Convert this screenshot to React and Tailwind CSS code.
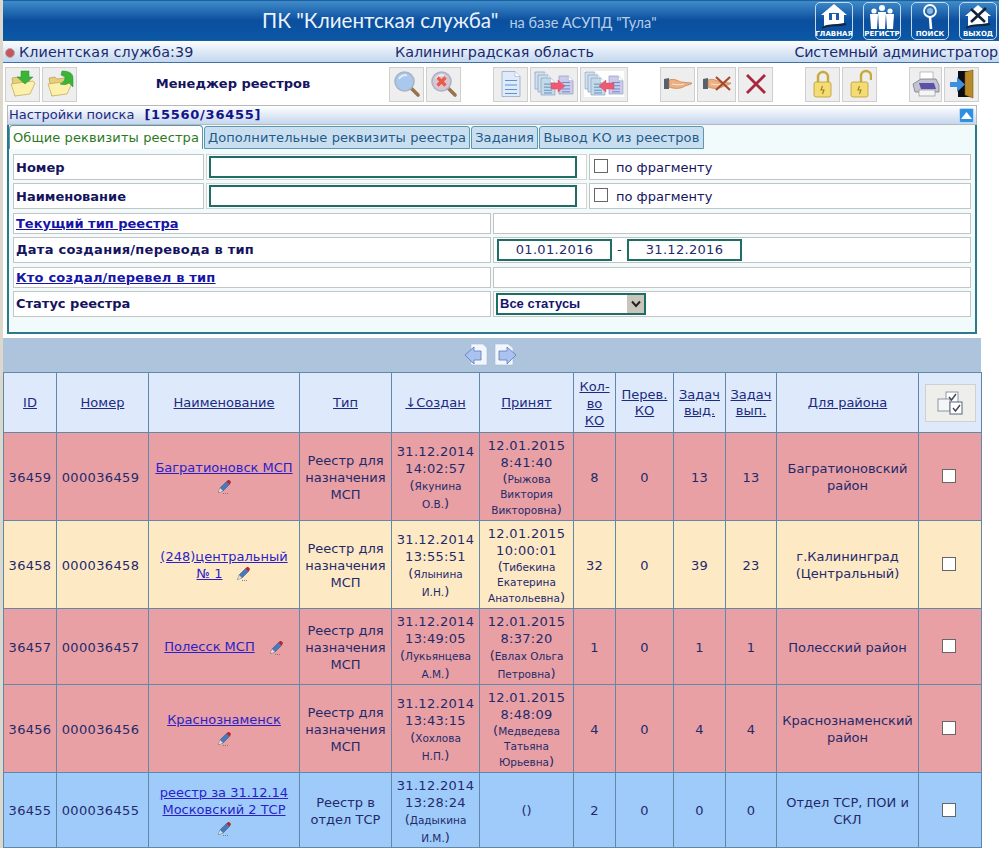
import React from 'react';

const FONT = { fontFamily: '"DejaVu Sans", Verdana, sans-serif' };

const rows = [
  { id: '36459', num: '000036459', name: ['Багратионовск МСП'], pen: 'below', type: ['Реестр для', 'назначения', 'МСП'], date: '31.12.2014', time: '14:02:57', by: ['Якунина', 'О.В.'], acceptDate: '12.01.2015', acceptTime: '8:41:40', acceptBy: ['Рыжова', 'Виктория', 'Викторовна'], ko: 8, moved: 0, given: 13, done: 13, area: ['Багратионовский', 'район'], bg: 'bg-[#e8a0a4]', h: 'h-[88px]' },
  { id: '36458', num: '000036458', name: ['(248)центральный', '№ 1'], pen: 'inline', type: ['Реестр для', 'назначения', 'МСП'], date: '31.12.2014', time: '13:55:51', by: ['Ялынина', 'И.Н.'], acceptDate: '12.01.2015', acceptTime: '10:00:01', acceptBy: ['Тибекина', 'Екатерина', 'Анатольевна'], ko: 32, moved: 0, given: 39, done: 23, area: ['г.Калининград', '(Центральный)'], bg: 'bg-[#fee9c5]', h: 'h-[88px]' },
  { id: '36457', num: '000036457', name: ['Полесск МСП'], pen: 'inline', type: ['Реестр для', 'назначения', 'МСП'], date: '31.12.2014', time: '13:49:05', by: ['Лукьянцева', 'А.М.'], acceptDate: '12.01.2015', acceptTime: '8:37:20', acceptBy: ['Евлах Ольга', 'Петровна'], ko: 1, moved: 0, given: 1, done: 1, area: ['Полесский район'], bg: 'bg-[#e8a0a4]', h: 'h-[76px]' },
  { id: '36456', num: '000036456', name: ['Краснознаменск'], pen: 'below', type: ['Реестр для', 'назначения', 'МСП'], date: '31.12.2014', time: '13:43:15', by: ['Хохлова', 'Н.П.'], acceptDate: '12.01.2015', acceptTime: '8:48:09', acceptBy: ['Медведева', 'Татьяна', 'Юрьевна'], ko: 4, moved: 0, given: 4, done: 4, area: ['Краснознаменский', 'район'], bg: 'bg-[#e8a0a4]', h: 'h-[88px]' },
  { id: '36455', num: '000036455', name: ['реестр за 31.12.14', 'Московский 2 ТСР'], pen: 'below', type: ['Реестр в', 'отдел ТСР'], date: '31.12.2014', time: '13:28:24', by: ['Дадыкина', 'И.М.'], acceptDate: '', acceptTime: '', acceptBy: [], ko: 2, moved: 0, given: 0, done: 0, area: ['Отдел ТСР, ПОИ и', 'СКЛ'], bg: 'bg-[#9fcbfb]', h: 'h-[75px]' },
];

function Pencil() {
  return (
    <svg width="16" height="16" viewBox="0 0 16 16" className="inline-block align-middle">
      <path d="M2.5 13.5 L4 9 L10.5 2.5 L13.5 5.5 L7 12 Z" fill="#4a78bd" stroke="#2e4f7c" strokeWidth="0.5" />
      <path d="M2.5 13.5 L4 9 L7 12 Z" fill="#eadfc4" />
      <path d="M10.5 2.5 L12 1 C13.4 0.4 15.4 2.4 14.8 3.8 L13.5 5.5 Z" fill="#b5262a" />
      <path d="M7 14.5h1M9 14.5h1M11 14.5h1" stroke="#6b6b6b" strokeWidth="0.8" />
    </svg>
  );
}

function Folder({ arrow }) {
  return (
    <svg width="28" height="28" viewBox="0 0 28 28">
      <path d="M3 8 L9 7 L11 9 L20 8 L22 20 L6 26 Z" fill="#e6cf7a" stroke="#b59c4e" strokeWidth="0.7" />
      <path d="M6 26 L2 14 L24 11 L26 13 L21 24 Z" fill="#fbf0ac" stroke="#c0a550" strokeWidth="0.7" />
      {arrow === 'down' ? (
        <path d="M12 1 H20 V7 H24 L16 14 L8 7 H12 Z" fill="#3cb339" stroke="#2b8f2c" strokeWidth="0.5" />
      ) : (
        <path d="M16 1 C21 1 27 2 27 8 V17 L23 13 C20 15 18 15 14 14 C18 12 19 10 19 7 L15 5 Z" fill="#3cb339" stroke="#2b8f2c" strokeWidth="0.5" />
      )}
    </svg>
  );
}

function Lens({ cross }) {
  return (
    <svg width="28" height="28" viewBox="0 0 28 28">
      <path d="M18 18 L25 25" stroke="#96744e" strokeWidth="3.6" strokeLinecap="round" />
      <circle cx="11.5" cy="11.5" r="9.5" fill={cross ? '#d9c6d2' : '#a9c8ec'} stroke="#a8b4c6" strokeWidth="1.6" />
      <path d="M6 9 a6.5 6.5 0 0 1 8 -3.5" stroke="#e8f2ff" strokeWidth="1.8" fill="none" />
      {cross && <path d="M7.5 7.5 L15.5 15.5 M15.5 7.5 L7.5 15.5" stroke="#ea5a4a" strokeWidth="3.2" />}
    </svg>
  );
}

function Doc({ x = 0, y = 0, w = 20, h = 26, fill = '#dfeafa' }) {
  const fold = Math.min(5, w / 3);
  return (
    <g transform={`translate(${x} ${y})`}>
      <path d={`M0 0H${w - fold}L${w} ${fold}V${h}H0Z`} fill={fill} stroke="#8a9fc0" strokeWidth="0.7" />
      <path d={`M${w - fold} 0V${fold}H${w}`} fill="#fff" stroke="#8a9fc0" strokeWidth="0.5" />
      <path d={`M3 ${h * 0.36}H${w - 3}M3 ${h * 0.54}H${w - 3}M3 ${h * 0.72}H${w - 3}M3 ${h * 0.88}H${w - 3}`} stroke="#5f93c8" strokeWidth="1" />
    </g>
  );
}

function DocIcon() {
  return <svg width="20" height="26" viewBox="0 0 20 26"><Doc x={1} y={0.5} w={18} h={25} /></svg>;
}

function DocsArrow({ flip }) {
  return (
    <svg width="40" height="26" viewBox="0 0 40 26" className={flip ? 'bg-white' : ''}>
      <Doc x={1} y={1} w={14} h={17} fill="#cfe0ee" />
      <Doc x={4} y={4} w={14} h={17} fill="#cfe0ee" />
      <Doc x={7} y={7} w={14} h={17} fill="#c4dbe6" />
      <Doc x={25} y={5} w={14} h={18} fill="#cfc9ea" />
      <path d={flip ? 'M15 15 L22 9 V12 H30 V18 H22 V21 Z' : 'M31 15 L24 9 V12 H17 V18 H24 V21 Z'} fill="#ee5a72" stroke="#c9405a" strokeWidth="0.4" />
    </svg>
  );
}

function Hand({ cross }) {
  return (
    <svg width="30" height="18" viewBox="0 0 30 18">
      <path d="M1 4 L6 3 V14 L1 14 Z" fill="#56626e" />
      <path d="M6 5 C11 3 15 6 18 7 L29 8 C28 10 24 10 22 11 C18 14 11 14 6 12 Z" fill="#eeb083" stroke="#b5723f" strokeWidth="0.6" />
      <path d="M9 9 C13 10 17 10 21 9" stroke="#fde0c4" strokeWidth="1.2" fill="none" />
      {cross && <path d="M14 2 L28 15 M28 2 L14 15" stroke="#a5492c" strokeWidth="2.2" />}
    </svg>
  );
}

function Lock({ open }) {
  return (
    <svg width="24" height="30" viewBox="0 0 24 30">
      <path d={open ? 'M13 13 V7 a5 5 0 0 1 10 0 V11' : 'M7 14 V8 a5 5 0 0 1 10 0 V14'} fill="none" stroke="#c9a93c" strokeWidth="2.4" />
      <rect x="3" y="13" width="17" height="15" rx="2" fill="#f3dc74" stroke="#bb9a34" strokeWidth="0.8" />
      <path d="M11.5 17 L10 21 H13 L11.5 25" stroke="#a27c1c" strokeWidth="1.1" fill="none" />
    </svg>
  );
}

function Printer() {
  return (
    <svg width="28" height="28" viewBox="0 0 28 28">
      <rect x="8" y="2" width="13" height="9" fill="#fff" stroke="#999" strokeWidth="0.6" />
      <path d="M1 14 L9 9 H24 L27 15 V22 H3 Z" fill="#c4c4d0" stroke="#6a6a7d" strokeWidth="0.7" />
      <path d="M7 13 H22 L24 19 H9 Z" fill="#5b51a8" />
      <rect x="7" y="20" width="16" height="6" fill="#f5f5f5" stroke="#888" strokeWidth="0.6" />
    </svg>
  );
}

function Door() {
  return (
    <svg width="28" height="30" viewBox="0 0 28 30">
      <rect x="10" y="2" width="14" height="26" fill="#0c0c14" />
      <path d="M17 3 L25 1 V29 L17 26 Z" fill="#b88a2a" stroke="#7c5a14" strokeWidth="0.6" />
      <path d="M2 13 H9 V8 L17 15.5 L9 23 V18 H2 Z" fill="#3f8fdf" />
    </svg>
  );
}

function ToolBtn({ className = 'w-[35px]', children }) {
  return (
    <div className={`h-[35px] flex items-center justify-center shrink-0 bg-[#eeeeee] border border-[#cfcfcf] ${className}`}>
      {children}
    </div>
  );
}

function NavIcon({ label, children }) {
  return (
    <div className="w-[38px] h-[38px] flex flex-col items-center justify-between border border-[#c4d9ee] rounded-[5px] overflow-hidden">
      <svg width="32" height="27" viewBox="0 0 32 27">{children}</svg>
      <span className="text-[7px] leading-[9px] font-bold text-white whitespace-nowrap">{label}</span>
    </div>
  );
}

function LabelCell({ className, link, children }) {
  return (
    <div className={`flex items-center shrink-0 pl-[2px] bg-white border border-[#c4c4c4] text-[13px] font-bold ${link ? 'text-[#1515a8] underline' : 'text-[#14145e]'} ${className}`}>
      {children}
    </div>
  );
}

function FragmentCheck() {
  return (
    <div className="flex items-center flex-1 pl-[4px] pt-[1px] bg-white border border-[#c4c4c4] text-[13px] text-[#14145e]">
      <input type="checkbox" readOnly className="appearance-none w-[14px] h-[14px] mr-[8px] mb-[4px] bg-white border border-[#666]" />
      по фрагменту
    </div>
  );
}

function Th({ lines }) {
  return (
    <th className={`border border-[#5f88ab] font-normal text-center p-0 pt-[1px] text-[13px] text-[#1c2a80] underline ${lines.length > 2 ? 'leading-[17px]' : 'leading-[16px]'}`}>
      {lines.map((l) => <div key={l}>{l}</div>)}
    </th>
  );
}

function Td({ children, className = '' }) {
  return <td className={`border border-[#5f88ab] text-center p-0 pt-[1px] text-[13px] leading-[17px] text-[#1f2a6b] ${className}`}>{children}</td>;
}

function Person({ lines }) {
  return (
    <div className={`text-[10.5px] ${lines.length > 2 ? 'leading-[15px]' : 'leading-[17px]'}`}>
      {lines.map((l, i) => (
        <div key={l}>
          {i === 0 && <span className="text-[13px]">(</span>}
          {l}
          {i === lines.length - 1 && <span className="text-[13px]">)</span>}
        </div>
      ))}
    </div>
  );
}

export default function App() {
  return (
    <div style={FONT} className="w-[999px] h-[848px] overflow-hidden bg-white flex flex-col border-l-[3px] border-[#dcd8cc]">
      {/* шапка */}
      <div className="h-[41px] shrink-0 flex items-center border-t border-b border-[#1c5f9f] bg-gradient-to-b from-[#3f8cca] via-[#0b4f9e] to-[#0a58a6] text-white">
        <div className="flex-1 flex items-baseline pl-[259px] whitespace-nowrap">
          <span style={{ fontFamily: 'Lato, sans-serif' }} className="text-[20.6px] text-[#eaf2fb]">ПК "Клиентская служба"</span>
          <span style={{ fontFamily: 'Lato, sans-serif' }} className="ml-[11px] text-[14.5px] text-[#b6cee8]">на базе АСУПД "Тула"</span>
        </div>
        <div className="flex gap-[10px] w-[184px] shrink-0">
          <NavIcon label="ГЛАВНАЯ">
            <path d="M16 1 L29 12 H26 V20 L6 23 V12 H3 Z" fill="#fff" />
            <path d="M11 10 H21 V17 H11 Z" fill="#1a5fa6" />
            <path d="M14 11 H18 V17 H14 Z" fill="#fff" />
            <path d="M4 25 C12 20 18 24 28 21" stroke="#14243c" strokeWidth="2" fill="none" />
          </NavIcon>
          <NavIcon label="РЕГИСТР">
            <g fill="#fff">
              <circle cx="8" cy="8" r="2.6" /><path d="M4 11 H12 L11 26 H5 Z" />
              <circle cx="16" cy="5" r="3" /><path d="M12 9 H20 L19 26 H13 Z" />
              <circle cx="24" cy="8" r="2.6" /><path d="M20 11 H28 L27 26 H21 Z" />
            </g>
          </NavIcon>
          <NavIcon label="ПОИСК">
            <circle cx="16" cy="8" r="6" fill="none" stroke="#fff" strokeWidth="1.8" />
            <circle cx="16" cy="8" r="3" fill="#8eb8de" />
            <path d="M16 14 L17 26" stroke="#fff" strokeWidth="2.6" />
          </NavIcon>
          <NavIcon label="ВЫХОД">
            <path d="M16 2 L29 13 H26 V20 L6 23 V13 H3 Z" fill="#fff" />
            <path d="M9 6 L23 19 M24 5 L9 19" stroke="#14243c" strokeWidth="2.6" />
            <path d="M4 25 C12 20 18 24 28 21" stroke="#14243c" strokeWidth="2" fill="none" />
          </NavIcon>
        </div>
      </div>

      {/* строка статуса */}
      <div className="h-[22px] shrink-0 flex items-center justify-between pt-[3px] border-b border-[#3f70a8] bg-gradient-to-b from-[#fbfdff] to-[#c3d7ee] text-[14.3px] text-[#1a2a6e] whitespace-nowrap">
        <div className="flex items-center w-[330px]">
          <span className="w-[10px] h-[10px] rounded-full bg-[#c9555a] border border-[#b0b0b0] ml-[2px] mr-[4px]" />
          <span className="tracking-[0.1px]">Клиентская служба:39</span>
        </div>
        <div className="w-[260px] ml-[62px]">Калининградская область</div>
        <div className="flex-1 text-right pr-[1px] tracking-[-0.15px]">Системный администратор</div>
      </div>

      {/* панель инструментов */}
      <div className="h-[42px] shrink-0 flex items-center pl-[2px] gap-[2px]">
        <ToolBtn><Folder arrow="down" /></ToolBtn>
        <ToolBtn><Folder arrow="right" /></ToolBtn>
        <div className="w-[308px] shrink-0 text-center text-[13px] font-bold text-[#14145e]">Менеджер реестров</div>
        <ToolBtn><Lens /></ToolBtn>
        <ToolBtn><Lens cross /></ToolBtn>
        <ToolBtn className="w-[35px] ml-[30px]"><DocIcon /></ToolBtn>
        <ToolBtn className="w-[48px]"><DocsArrow /></ToolBtn>
        <ToolBtn className="w-[48px]"><DocsArrow flip /></ToolBtn>
        <ToolBtn className="w-[35px] ml-[30px]"><Hand /></ToolBtn>
        <ToolBtn className="w-[39px]"><Hand cross /></ToolBtn>
        <ToolBtn className="w-[35px]">
          <svg width="24" height="24" viewBox="0 0 24 24"><path d="M3 3 L21 21 M21 3 L3 21" stroke="#a8283f" strokeWidth="2.8" /></svg>
        </ToolBtn>
        <ToolBtn className="w-[35px] ml-[30px]"><Lock /></ToolBtn>
        <ToolBtn className="w-[35px]"><Lock open /></ToolBtn>
        <ToolBtn className="w-[33px] ml-[30px]"><Printer /></ToolBtn>
        <ToolBtn><Door /></ToolBtn>
      </div>

      {/* настройки поиска */}
      <div className="ml-[4px] w-[970px] h-[229px] shrink-0 flex flex-col">
        <div className="h-[20px] shrink-0 flex items-center justify-between pl-[1px] pr-[2px] border border-[#b8b8b8] bg-gradient-to-b from-white to-[#c5d6ee] text-[13px] text-[#1f2a80]">
          <div>
            Настройки поиска
            <span className="ml-[10px] font-bold text-[#14148a] tracking-[0.75px]">[15560/36455]</span>
          </div>
          <div className="w-[15px] h-[15px] flex items-center justify-center rounded-[2px] bg-[#2f8fe0] border border-[#b7d8f4]">
            <svg width="11" height="7" viewBox="0 0 11 7"><path d="M5.5 0 L11 7 H0 Z" fill="#fff" /></svg>
          </div>
        </div>
        <div className="flex-1 flex flex-col border-2 border-t-0 border-[#2a7a8a] bg-[#f1fbfb]">
          <div className="h-[24px] shrink-0 flex items-end text-[13px] whitespace-nowrap tracking-[0.1px]">
            <div className="w-[194px] h-[24px] flex items-center justify-center pt-[1px] bg-white border border-b-0 border-[#5a97b3] rounded-t-[4px] text-[#2a7a1c]">Общие реквизиты реестра</div>
            <div className="w-[266px] ml-[1px] h-[23px] flex items-center justify-center bg-[#c9dff0] border border-[#5a97b3] rounded-t-[3px] text-[#1f5a8a]">Дополнительные реквизиты реестра</div>
            <div className="w-[67px] ml-[1px] h-[23px] flex items-center justify-center bg-[#c9dff0] border border-[#5a97b3] rounded-t-[3px] text-[#1f5a8a]">Задания</div>
            <div className="w-[165px] ml-[1px] h-[23px] flex items-center justify-center bg-[#c9dff0] border border-[#5a97b3] rounded-t-[3px] text-[#1f5a8a]">Вывод КО из реестров</div>
          </div>
          <div className="flex flex-col pl-[4px] pr-[4px] pt-[5px] whitespace-nowrap">
            <div className="h-[26px] flex gap-[2px]">
              <LabelCell className="w-[191px] pt-[1px]">Номер</LabelCell>
              <div className="w-[381px] shrink-0 pl-[2px] flex items-center bg-white border border-[#d4d4d4]">
                <input readOnly className="w-[368px] h-[22px] border-2 border-[#1c6e66] bg-white" />
              </div>
              <FragmentCheck />
            </div>
            <div className="h-[26px] mt-[3px] flex gap-[2px]">
              <LabelCell className="w-[191px] pt-[1px]">Наименование</LabelCell>
              <div className="w-[381px] shrink-0 pl-[2px] flex items-center bg-white border border-[#d4d4d4]">
                <input readOnly className="w-[368px] h-[22px] border-2 border-[#1c6e66] bg-white" />
              </div>
              <FragmentCheck />
            </div>
            <div className="h-[21px] mt-[4px] flex gap-[2px]">
              <LabelCell link className="w-[478px]">Текущий тип реестра</LabelCell>
              <div className="flex-1 bg-white border border-[#c4c4c4]" />
            </div>
            <div className="h-[26px] mt-[3px] flex gap-[2px]">
              <LabelCell className="w-[478px] tracking-[0.25px]">Дата создания/перевода в тип</LabelCell>
              <div className="flex-1 flex items-center pl-[3px] bg-white border border-[#c4c4c4] text-[13px] text-[#1f2a6b] tracking-[0.3px]">
                <div className="w-[115px] h-[22px] flex items-center justify-center border-2 border-[#1c6e66]">01.01.2016</div>
                <span className="w-[15px] text-center">-</span>
                <div className="w-[115px] h-[22px] flex items-center justify-center border-2 border-[#1c6e66]">31.12.2016</div>
              </div>
            </div>
            <div className="h-[21px] mt-[4px] flex gap-[2px]">
              <LabelCell link className="w-[478px] tracking-[0.2px]">Кто создал/перевел в тип</LabelCell>
              <div className="flex-1 bg-white border border-[#c4c4c4]" />
            </div>
            <div className="h-[26px] mt-[3px] flex gap-[2px]">
              <LabelCell className="w-[478px]">Статус реестра</LabelCell>
              <div className="flex-1 flex items-center pl-[2px] bg-white border border-[#c4c4c4]">
                <div className="w-[150px] h-[22px] flex items-center justify-between border-[2px] border-[#1c6e66] pl-[2px] text-[13px] font-bold text-[#14146e]" style={{ fontFamily: '"Liberation Sans", sans-serif' }}>
                  Все статусы
                  <div className="w-[17px] h-full flex items-center justify-center bg-[#c9c5ba]">
                    <svg width="10" height="8" viewBox="0 0 10 8"><path d="M1 1.5 L5 6 L9 1.5" fill="none" stroke="#222" strokeWidth="2" /></svg>
                  </div>
                </div>
              </div>
            </div>
          </div>
        </div>
      </div>

      {/* постраничная навигация */}
      <div className="w-[978px] h-[34px] mt-[4px] shrink-0 flex items-center justify-center gap-[5px] pr-[3px] bg-[#aec3dc]">
        <svg width="24" height="24" viewBox="0 0 24 24">
          <path d="M7 1 H19 L23 5 V22 H7 Z" fill="#f2f6fd" stroke="#a9bbd6" strokeWidth="0.6" />
          <path d="M1 12 L10 4 V8 H17 V17 H10 V21 Z" fill="#a9c2f0" stroke="#5a7cb8" strokeWidth="0.8" />
        </svg>
        <svg width="24" height="24" viewBox="0 0 24 24">
          <path d="M2 1 H15 L20 5 V22 H2 Z" fill="#f2f6fd" stroke="#a9bbd6" strokeWidth="0.6" />
          <path d="M23 12 L14 4 V8 H6 V17 H14 V21 Z" fill="#a9c2f0" stroke="#5a7cb8" strokeWidth="0.8" />
        </svg>
      </div>

      {/* таблица */}
      <table className="table-fixed border-collapse w-[978px] shrink-0">
        <colgroup>
          <col className="w-[53px]" /><col className="w-[92px]" /><col className="w-[151px]" /><col className="w-[92px]" />
          <col className="w-[88px]" /><col className="w-[94px]" /><col className="w-[42px]" /><col className="w-[58px]" />
          <col className="w-[52px]" /><col className="w-[51px]" /><col className="w-[142px]" /><col className="w-[63px]" />
        </colgroup>
        <thead>
          <tr className="h-[60px] bg-[#deeafb]">
            <Th lines={['ID']} />
            <Th lines={['Номер']} />
            <Th lines={['Наименование']} />
            <Th lines={['Тип']} />
            <Th lines={['↓Создан']} />
            <Th lines={['Принят']} />
            <Th lines={['Кол-', 'во', 'КО']} />
            <Th lines={['Перев.', 'КО']} />
            <Th lines={['Задач', 'выд.']} />
            <Th lines={['Задач', 'вып.']} />
            <Th lines={['Для района']} />
            <th className="border border-[#5f88ab] p-0">
              <div className="w-[51px] h-[38px] mx-auto flex items-center justify-center bg-[#eeeeea] border border-[#d0d0d0]">
                <svg width="26" height="24" viewBox="0 0 26 24">
                  <rect x="9" y="1" width="12" height="12" fill="#fff" stroke="#8a97a8" />
                  <rect x="1" y="8" width="12" height="12" fill="#f4f6f8" stroke="#8a97a8" />
                  <rect x="13" y="11" width="12" height="12" fill="#fff" stroke="#55657a" />
                  <path d="M12 6 L14.5 9 L19 3 M16 17 L18.5 20 L23 14" fill="none" stroke="#445" strokeWidth="1.4" />
                </svg>
              </div>
            </th>
          </tr>
        </thead>
        <tbody>
          {rows.map((r) => (
            <tr key={r.id} className={`${r.h} ${r.bg}`}>
              <Td className="tracking-[0.3px]">{r.id}</Td>
              <Td className="tracking-[0.35px] pr-[4px]">{r.num}</Td>
              <Td>
                {r.name.map((line, i) => (
                  <div key={line}>
                    <a href="#" className="text-[#2a1fc8] underline">{line}</a>
                    {r.pen === 'inline' && i === r.name.length - 1 && <span className="ml-[13px]"><Pencil /></span>}
                  </div>
                ))}
                {r.pen === 'below' && <div className="mt-[1px]"><Pencil /></div>}
              </Td>
              <Td className="leading-[16.5px]">{r.type.map((t) => <div key={t}>{t}</div>)}</Td>
              <Td>
                <div className="pt-[2px]">
                  <div className="tracking-[0.3px]">{r.date}</div>
                  <div className="tracking-[0.3px]">{r.time}</div>
                  <Person lines={r.by} />
                </div>
              </Td>
              <Td>
                {r.acceptDate ? (
                  <div className="pt-[1px]">
                    <div className="tracking-[0.3px]">{r.acceptDate}</div>
                    <div className="tracking-[0.3px]">{r.acceptTime}</div>
                    <Person lines={r.acceptBy} />
                  </div>
                ) : '()'}
              </Td>
              <Td className="tracking-[0.3px]">{r.ko}</Td>
              <Td className="tracking-[0.3px]">{r.moved}</Td>
              <Td className="tracking-[0.3px]">{r.given}</Td>
              <Td className="tracking-[0.3px]">{r.done}</Td>
              <Td>{r.area.map((a) => <div key={a}>{a}</div>)}</Td>
              <Td><input type="checkbox" readOnly className="appearance-none w-[14px] h-[14px] align-middle bg-white border border-[#666] -ml-[2px] mb-[3px]" /></Td>
            </tr>
          ))}
        </tbody>
      </table>
    </div>
  );
}
